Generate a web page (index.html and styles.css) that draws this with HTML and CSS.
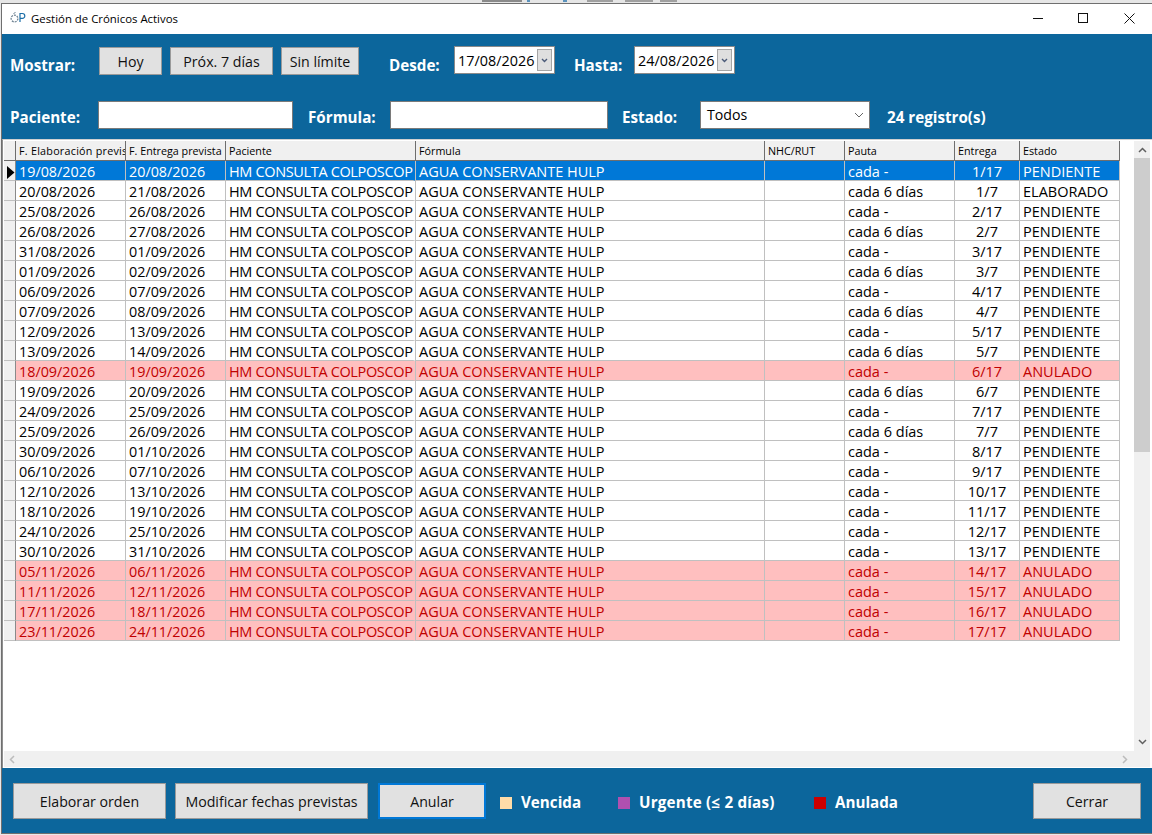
FILE: index.html
```html
<!DOCTYPE html>
<html lang="es">
<head>
<meta charset="utf-8">
<title>Gestión de Crónicos Activos</title>
<link rel="stylesheet" href="styles.css">
</head>
<body>
<div class="desktop"></div>
<div class="window">
  <header class="titlebar">
    <svg class="appicon" width="16" height="14" viewBox="0 0 16 14"><circle cx="4.5" cy="7.5" r="3.4" fill="none" stroke="#6b7f8f" stroke-width="1.2" stroke-dasharray="2 1"/><path d="M5.5 1.5l-2 1" stroke="#6b7f8f" fill="none"/><path d="M10 11V2.5h2.4a2.4 2.4 0 0 1 0 4.8H10" fill="none" stroke="#1b6ea8" stroke-width="1.2"/></svg>
    <span class="wintitle">Gestión de Crónicos Activos</span>
    <div class="wincontrols">
      <svg width="11" height="11" viewBox="0 0 11 11"><path d="M0 5.5h10" stroke="#111" fill="none"/></svg>
      <svg width="11" height="11" viewBox="0 0 11 11"><rect x="0.5" y="0.5" width="9" height="9" stroke="#111" fill="none"/></svg>
      <svg class="closeicon" width="11" height="11" viewBox="0 0 11 11"><path d="M0.5 0.5l10 10M10.5 0.5l-10 10" stroke="#111" fill="none"/></svg>
    </div>
  </header>
  <section class="filters">
    <div class="frow frow1">
      <label class="lbl l-mostrar">Mostrar:</label>
      <button class="btn b-hoy">Hoy</button>
      <button class="btn b-prox">Próx. 7 días</button>
      <button class="btn b-sin">Sin límite</button>
      <label class="lbl l-desde">Desde:</label>
      <div class="date"><span>17/08/2026</span><i class="drop"><svg width="7" height="5" viewBox="0 0 7 5"><path d="M1 1l2.5 2.5L6 1" fill="none" stroke="#4a5a78" stroke-width="1.4"/></svg></i></div>
      <label class="lbl l-hasta">Hasta:</label>
      <div class="date"><span>24/08/2026</span><i class="drop"><svg width="7" height="5" viewBox="0 0 7 5"><path d="M1 1l2.5 2.5L6 1" fill="none" stroke="#4a5a78" stroke-width="1.4"/></svg></i></div>
    </div>
    <div class="frow frow2">
      <label class="lbl l-pac">Paciente:</label>
      <input class="txt t-pac" type="text">
      <label class="lbl l-for">Fórmula:</label>
      <input class="txt t-for" type="text">
      <label class="lbl l-est">Estado:</label>
      <div class="combo"><span>Todos</span><svg width="10" height="6" viewBox="0 0 10 6"><path d="M1 1l4 4 4-4" fill="none" stroke="#666"/></svg></div>
      <span class="lbl count">24 registro(s)</span>
    </div>
  </section>
  <section class="gridwrap">
    <div class="gridmain">
      <div class="grid" id="grid">
        <div class="row head"><div class="rh"></div><div class="c c1">F. Elaboración prevista</div><div class="c c2">F. Entrega prevista</div><div class="c c3">Paciente</div><div class="c c4">Fórmula</div><div class="c c5">NHC/RUT</div><div class="c c6">Pauta</div><div class="c c7">Entrega</div><div class="c c8">Estado</div></div>
        <div class="row sel"><div class="rh"><svg width="8" height="13" viewBox="0 0 8 13"><path d="M0 0l7.5 6.5L0 13z" fill="#000"/></svg></div><div class="c c1">19/08/2026</div><div class="c c2">20/08/2026</div><div class="c c3">HM CONSULTA COLPOSCOPIA</div><div class="c c4">AGUA CONSERVANTE HULP</div><div class="c c5"></div><div class="c c6">cada -</div><div class="c c7">1/17</div><div class="c c8">PENDIENTE</div></div>
        <div class="row"><div class="rh"></div><div class="c c1">20/08/2026</div><div class="c c2">21/08/2026</div><div class="c c3">HM CONSULTA COLPOSCOPIA</div><div class="c c4">AGUA CONSERVANTE HULP</div><div class="c c5"></div><div class="c c6">cada 6 días</div><div class="c c7">1/7</div><div class="c c8">ELABORADO</div></div>
        <div class="row"><div class="rh"></div><div class="c c1">25/08/2026</div><div class="c c2">26/08/2026</div><div class="c c3">HM CONSULTA COLPOSCOPIA</div><div class="c c4">AGUA CONSERVANTE HULP</div><div class="c c5"></div><div class="c c6">cada -</div><div class="c c7">2/17</div><div class="c c8">PENDIENTE</div></div>
        <div class="row"><div class="rh"></div><div class="c c1">26/08/2026</div><div class="c c2">27/08/2026</div><div class="c c3">HM CONSULTA COLPOSCOPIA</div><div class="c c4">AGUA CONSERVANTE HULP</div><div class="c c5"></div><div class="c c6">cada 6 días</div><div class="c c7">2/7</div><div class="c c8">PENDIENTE</div></div>
        <div class="row"><div class="rh"></div><div class="c c1">31/08/2026</div><div class="c c2">01/09/2026</div><div class="c c3">HM CONSULTA COLPOSCOPIA</div><div class="c c4">AGUA CONSERVANTE HULP</div><div class="c c5"></div><div class="c c6">cada -</div><div class="c c7">3/17</div><div class="c c8">PENDIENTE</div></div>
        <div class="row"><div class="rh"></div><div class="c c1">01/09/2026</div><div class="c c2">02/09/2026</div><div class="c c3">HM CONSULTA COLPOSCOPIA</div><div class="c c4">AGUA CONSERVANTE HULP</div><div class="c c5"></div><div class="c c6">cada 6 días</div><div class="c c7">3/7</div><div class="c c8">PENDIENTE</div></div>
        <div class="row"><div class="rh"></div><div class="c c1">06/09/2026</div><div class="c c2">07/09/2026</div><div class="c c3">HM CONSULTA COLPOSCOPIA</div><div class="c c4">AGUA CONSERVANTE HULP</div><div class="c c5"></div><div class="c c6">cada -</div><div class="c c7">4/17</div><div class="c c8">PENDIENTE</div></div>
        <div class="row"><div class="rh"></div><div class="c c1">07/09/2026</div><div class="c c2">08/09/2026</div><div class="c c3">HM CONSULTA COLPOSCOPIA</div><div class="c c4">AGUA CONSERVANTE HULP</div><div class="c c5"></div><div class="c c6">cada 6 días</div><div class="c c7">4/7</div><div class="c c8">PENDIENTE</div></div>
        <div class="row"><div class="rh"></div><div class="c c1">12/09/2026</div><div class="c c2">13/09/2026</div><div class="c c3">HM CONSULTA COLPOSCOPIA</div><div class="c c4">AGUA CONSERVANTE HULP</div><div class="c c5"></div><div class="c c6">cada -</div><div class="c c7">5/17</div><div class="c c8">PENDIENTE</div></div>
        <div class="row"><div class="rh"></div><div class="c c1">13/09/2026</div><div class="c c2">14/09/2026</div><div class="c c3">HM CONSULTA COLPOSCOPIA</div><div class="c c4">AGUA CONSERVANTE HULP</div><div class="c c5"></div><div class="c c6">cada 6 días</div><div class="c c7">5/7</div><div class="c c8">PENDIENTE</div></div>
        <div class="row void"><div class="rh"></div><div class="c c1">18/09/2026</div><div class="c c2">19/09/2026</div><div class="c c3">HM CONSULTA COLPOSCOPIA</div><div class="c c4">AGUA CONSERVANTE HULP</div><div class="c c5"></div><div class="c c6">cada -</div><div class="c c7">6/17</div><div class="c c8">ANULADO</div></div>
        <div class="row"><div class="rh"></div><div class="c c1">19/09/2026</div><div class="c c2">20/09/2026</div><div class="c c3">HM CONSULTA COLPOSCOPIA</div><div class="c c4">AGUA CONSERVANTE HULP</div><div class="c c5"></div><div class="c c6">cada 6 días</div><div class="c c7">6/7</div><div class="c c8">PENDIENTE</div></div>
        <div class="row"><div class="rh"></div><div class="c c1">24/09/2026</div><div class="c c2">25/09/2026</div><div class="c c3">HM CONSULTA COLPOSCOPIA</div><div class="c c4">AGUA CONSERVANTE HULP</div><div class="c c5"></div><div class="c c6">cada -</div><div class="c c7">7/17</div><div class="c c8">PENDIENTE</div></div>
        <div class="row"><div class="rh"></div><div class="c c1">25/09/2026</div><div class="c c2">26/09/2026</div><div class="c c3">HM CONSULTA COLPOSCOPIA</div><div class="c c4">AGUA CONSERVANTE HULP</div><div class="c c5"></div><div class="c c6">cada 6 días</div><div class="c c7">7/7</div><div class="c c8">PENDIENTE</div></div>
        <div class="row"><div class="rh"></div><div class="c c1">30/09/2026</div><div class="c c2">01/10/2026</div><div class="c c3">HM CONSULTA COLPOSCOPIA</div><div class="c c4">AGUA CONSERVANTE HULP</div><div class="c c5"></div><div class="c c6">cada -</div><div class="c c7">8/17</div><div class="c c8">PENDIENTE</div></div>
        <div class="row"><div class="rh"></div><div class="c c1">06/10/2026</div><div class="c c2">07/10/2026</div><div class="c c3">HM CONSULTA COLPOSCOPIA</div><div class="c c4">AGUA CONSERVANTE HULP</div><div class="c c5"></div><div class="c c6">cada -</div><div class="c c7">9/17</div><div class="c c8">PENDIENTE</div></div>
        <div class="row"><div class="rh"></div><div class="c c1">12/10/2026</div><div class="c c2">13/10/2026</div><div class="c c3">HM CONSULTA COLPOSCOPIA</div><div class="c c4">AGUA CONSERVANTE HULP</div><div class="c c5"></div><div class="c c6">cada -</div><div class="c c7">10/17</div><div class="c c8">PENDIENTE</div></div>
        <div class="row"><div class="rh"></div><div class="c c1">18/10/2026</div><div class="c c2">19/10/2026</div><div class="c c3">HM CONSULTA COLPOSCOPIA</div><div class="c c4">AGUA CONSERVANTE HULP</div><div class="c c5"></div><div class="c c6">cada -</div><div class="c c7">11/17</div><div class="c c8">PENDIENTE</div></div>
        <div class="row"><div class="rh"></div><div class="c c1">24/10/2026</div><div class="c c2">25/10/2026</div><div class="c c3">HM CONSULTA COLPOSCOPIA</div><div class="c c4">AGUA CONSERVANTE HULP</div><div class="c c5"></div><div class="c c6">cada -</div><div class="c c7">12/17</div><div class="c c8">PENDIENTE</div></div>
        <div class="row"><div class="rh"></div><div class="c c1">30/10/2026</div><div class="c c2">31/10/2026</div><div class="c c3">HM CONSULTA COLPOSCOPIA</div><div class="c c4">AGUA CONSERVANTE HULP</div><div class="c c5"></div><div class="c c6">cada -</div><div class="c c7">13/17</div><div class="c c8">PENDIENTE</div></div>
        <div class="row void"><div class="rh"></div><div class="c c1">05/11/2026</div><div class="c c2">06/11/2026</div><div class="c c3">HM CONSULTA COLPOSCOPIA</div><div class="c c4">AGUA CONSERVANTE HULP</div><div class="c c5"></div><div class="c c6">cada -</div><div class="c c7">14/17</div><div class="c c8">ANULADO</div></div>
        <div class="row void"><div class="rh"></div><div class="c c1">11/11/2026</div><div class="c c2">12/11/2026</div><div class="c c3">HM CONSULTA COLPOSCOPIA</div><div class="c c4">AGUA CONSERVANTE HULP</div><div class="c c5"></div><div class="c c6">cada -</div><div class="c c7">15/17</div><div class="c c8">ANULADO</div></div>
        <div class="row void"><div class="rh"></div><div class="c c1">17/11/2026</div><div class="c c2">18/11/2026</div><div class="c c3">HM CONSULTA COLPOSCOPIA</div><div class="c c4">AGUA CONSERVANTE HULP</div><div class="c c5"></div><div class="c c6">cada -</div><div class="c c7">16/17</div><div class="c c8">ANULADO</div></div>
        <div class="row void"><div class="rh"></div><div class="c c1">23/11/2026</div><div class="c c2">24/11/2026</div><div class="c c3">HM CONSULTA COLPOSCOPIA</div><div class="c c4">AGUA CONSERVANTE HULP</div><div class="c c5"></div><div class="c c6">cada -</div><div class="c c7">17/17</div><div class="c c8">ANULADO</div></div>
      </div>
      <div class="vscroll">
        <svg width="9" height="6" viewBox="0 0 9 6"><path d="M1 5l3.5-3.5L8 5" fill="none" stroke="#606060" stroke-width="1.5"/></svg>
        <div class="vtrack"><div class="vthumb"></div></div>
        <svg width="9" height="6" viewBox="0 0 9 6"><path d="M1 1l3.5 3.5L8 1" fill="none" stroke="#606060" stroke-width="1.5"/></svg>
      </div>
    </div>
    <div class="hscroll">
      <svg width="6" height="9" viewBox="0 0 6 9"><path d="M5 1L1.5 4.5 5 8" fill="none" stroke="#bcbcbc" stroke-width="1.5"/></svg>
      <svg width="6" height="9" viewBox="0 0 6 9"><path d="M1 1l3.5 3.5L1 8" fill="none" stroke="#bcbcbc" stroke-width="1.5"/></svg>
    </div>
  </section>
  <footer class="footer">
    <button class="btn fbtn f-ela">Elaborar orden</button>
    <button class="btn fbtn f-mod">Modificar fechas previstas</button>
    <button class="btn fbtn f-anu">Anular</button>
    <span class="sw sw-v"></span><span class="lbl leg leg-v">Vencida</span>
    <span class="sw sw-u"></span><span class="lbl leg leg-u">Urgente (≤ 2 días)</span>
    <span class="sw sw-a"></span><span class="lbl leg leg-a">Anulada</span>
    <button class="btn fbtn f-cer">Cerrar</button>
  </footer>
</div>
</body>
</html>
```

FILE: styles.css
```css
* { box-sizing: border-box; }
html, body { margin: 0; padding: 0; height: 100%; overflow: hidden; }
body {
  background: #e9e9e9;
  font-family: "Open Sans", "Noto Sans", sans-serif;
  color: #000;
  width: 1152px;
  height: 835px;
  display: flex;
  flex-direction: column;
  align-items: flex-end;
}
.desktop {
  height: 3px;
  width: 100%;
  flex: none;
  background-color: #e6e6e6;
  background-image: linear-gradient(to right,
    transparent 482px, #8a8a8a 482px, #8a8a8a 522px, transparent 522px,
    transparent 527px, #5b93bd 527px, #5b93bd 530px, transparent 530px,
    transparent 563px, #5b93bd 563px, #5b93bd 567px, transparent 567px,
    transparent 587px, #a0a0a0 587px, #a0a0a0 613px, transparent 613px,
    transparent 625px, #a0a0a0 625px, #a0a0a0 653px, transparent 653px,
    transparent 660px, #a0a0a0 660px, #a0a0a0 677px, transparent 677px);
  background-size: 100% 2px;
  background-repeat: no-repeat;
}
.window {
  width: 1151px;
  height: 831px;
  flex: none;
  border-top: 1px solid #6f6f6f;
  border-left: 1px solid #6f6f6f;
  border-bottom: 1px solid #6f6f6f;
  background: #fff;
  display: flex;
  flex-direction: column;
}
.titlebar {
  height: 30px;
  flex: none;
  display: flex;
  align-items: center;
  padding-left: 8px;
  padding-bottom: 2px;
  background: #fff;
}
.appicon { flex: none; margin-right: 5px; }
.wintitle { font-size: 11.4px; }
.wincontrols {
  margin-left: auto;
  display: flex;
  gap: 34px;
  padding-right: 17px;
  align-items: center;
}
.closeicon { margin-left: 1px; }
.filters {
  height: 105px;
  flex: none;
  background: #0c669c;
  padding-left: 8px;
}
.frow { display: flex; align-items: center; }
.frow1 { height: 42px; padding-top: 10px; margin-top: 2px; }
.frow2 { height: 28px; margin-top: 23px; }
.lbl {
  color: #fff;
  font-weight: 700;
  font-size: 15.2px;
  white-space: nowrap;
}
.btn {
  font-family: inherit;
  font-size: 14.2px;
  color: #111;
  background: #e1e1e1;
  border: 1px solid #9a9a9a;
  padding: 0;
  margin: 0;
  flex: none;
}
.frow1 .btn { height: 28px; margin-top: -2px; }
.frow1 .b-hoy { width: 63px; margin-left: 24px; }
.frow1 .b-prox { width: 103px; margin-left: 8px; }
.frow1 .b-sin { width: 78px; margin-left: 8px; }
.l-mostrar { width: 65px; margin-top: 6px; }
.l-desde { margin-left: 30px; width: 65px; margin-top: 6px; }
.l-hasta { margin-left: 19px; width: 60px; margin-top: 6px; }
.frow2 .lbl { margin-top: 4px; }
.date {
  width: 101px;
  height: 28px;
  background: #fff;
  border: 1px solid #8a8a8a;
  display: flex;
  align-items: center;
  justify-content: space-between;
  padding: 0 2px 0 3px;
  font-size: 14.4px;
  margin-top: -4px;
  flex: none;
}
.drop {
  width: 15px;
  height: 22px;
  background: #dfdfdf;
  border: 1px solid #a5a5a5;
  display: flex;
  align-items: center;
  justify-content: center;
}
.txt {
  height: 28px;
  border: 1px solid #7a7a7a;
  background: #fff;
  padding: 0;
  margin: 0;
  flex: none;
  border-radius: 0;
  outline: none;
}
.l-pac { width: 88px; }
.t-pac { width: 195px; }
.l-for { width: 82px; margin-left: 15px; }
.t-for { width: 218px; }
.l-est { width: 78px; margin-left: 14px; }
.combo {
  width: 170px;
  height: 28px;
  background: #fff;
  border: 1px solid #7a7a7a;
  display: flex;
  align-items: center;
  justify-content: space-between;
  padding: 0 5px 2px 6px;
  font-size: 14.2px;
  flex: none;
}
.combo svg { margin-top: 2px; }
.frow2 .count { margin-left: 17px; }
.gridwrap {
  height: 629px;
  flex: none;
  background: #fff;
  border-top: 1px solid #d0d0d0;
  border-left: 1px solid #8f8f8f;
  padding-left: 1px;
  padding-right: 2px;
  display: flex;
  flex-direction: column;
}
.gridmain { flex: 1; display: flex; min-height: 0; }
.grid { flex: 1; min-width: 0; padding-top: 1px; }
.row {
  display: grid;
  grid-template-columns: 12px 110px 100px 190px 349px 80px 110px 65px 100px;
  width: 1116px;
  height: 20px;
  font-size: 14.5px;
  line-height: 21px;
}
.row .c {
  padding-left: 3px;
  border-right: 1px solid #c0c0c0;
  border-bottom: 1px solid #c0c0c0;
  white-space: nowrap;
  overflow: hidden;
}
.row .c1, .row .c2 { font-size: 14.35px; }
.row .c7 { text-align: center; padding-left: 0; }
.row .c3, .head .c1 {
  border-right: 3px solid transparent;
  background-image: linear-gradient(#c0c0c0, #c0c0c0);
  background-size: 1px 100%;
  background-position: right top;
  background-repeat: no-repeat;
  background-origin: border-box;
}
.row .c3 { letter-spacing: -0.35px; }
.rh {
  background: #f0f0f0;
  border-right: 1px solid #8a8a8a;
  border-bottom: 1px solid #c0c0c0;
  display: flex;
  align-items: center;
  padding-left: 3px;
}
.rh svg { margin-top: 3px; }
.row.head { font-size: 10.75px; line-height: 20px; }
.row.head .c { font-size: 10.75px; }
.head .c, .head .rh {
  background-color: #f0f0f0;
  border-right: 1px solid #6e6e6e;
  border-bottom: 1px solid #6e6e6e;
}
.row.head .c1, .row.head .c3 { border-right-color: transparent; background-image: linear-gradient(#6e6e6e, #6e6e6e); }
.row.head .c1 { letter-spacing: 0.25px; }
.row.head .c3 { letter-spacing: 0; }
.row.head .c7 { text-align: left; padding-left: 3px; }
.sel .c { background-color: #0078d7; color: #fff; }
.void .c { background-color: #ffbfbf; color: #c00000; }
.vscroll {
  width: 16px;
  flex: none;
  margin-top: 1px;
  background: #f0f0f0;
  display: flex;
  flex-direction: column;
  align-items: center;
  padding: 6px 0;
}
.vtrack { flex: 1; width: 100%; margin: 5px 0 6px; }
.vthumb { width: 100%; height: 294px; background: #cdcdcd; }
.hscroll {
  height: 16px;
  flex: none;
  background: #f0f0f0;
  margin-bottom: 1px;
  display: flex;
  align-items: center;
  justify-content: space-between;
  padding: 0 22px 0 5px;
}
.footer {
  height: 65px;
  flex: none;
  background: #0c669c;
  display: flex;
  align-items: center;
  padding-left: 11px;
  padding-top: 1px;
}
.fbtn { height: 36px; }
.f-ela { width: 153px; }
.btn.f-mod { width: 193px; margin-left: 9px; }
.btn.f-anu { width: 108px; margin-left: 10px; border: 2px solid #0078d7; }
.sw { width: 12px; height: 12px; flex: none; margin-top: 4px; }
.sw-v { background: #ffdca8; margin-left: 14px; }
.sw-u { background: #b050b0; margin-left: 36px; }
.sw-a { background: #cc0000; margin-left: 39px; }
.leg { margin-left: 9px; margin-top: 2px; }
.leg-v { width: 61px; }
.leg-u { width: 136px; letter-spacing: 0.2px; }
.leg-a { width: 64px; }
.btn.f-cer { width: 108px; margin-left: auto; margin-right: 11px; }
```
